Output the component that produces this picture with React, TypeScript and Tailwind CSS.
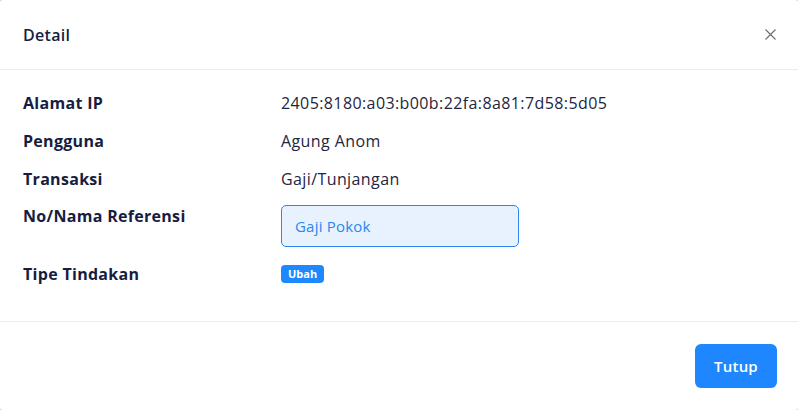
export default function App() {
  const rows = [
    { label: "Alamat IP", value: "2405:8180:a03:b00b:22fa:8a81:7d58:5d05" },
    { label: "Pengguna", value: "Agung Anom" },
    { label: "Transaksi", value: "Gaji/Tunjangan" },
  ];

  return (
    <div
      className="w-[798px] h-[410px] bg-gray-300"
      style={{ fontFamily: '"Open Sans", "Noto Sans", sans-serif' }}
    >
      <div className="w-full h-full bg-white rounded-[3px] flex flex-col">
        {/* header */}
        <div className="h-[70px] shrink-0 flex items-center justify-between pl-[23px] pr-[20px] border-b border-[#ececec]">
          <h2 className="text-[16px] font-semibold tracking-[0.3px] text-[#161d3f]">Detail</h2>
          <button className="w-4 h-4 flex items-center justify-center text-[#6b6b6b]">
            <svg width="11" height="11" viewBox="0 0 11 11" fill="none">
              <path d="M0.5 0.5L10.5 10.5M10.5 0.5L0.5 10.5" stroke="currentColor" strokeWidth="1.1" />
            </svg>
          </button>
        </div>

        {/* body */}
        <div className="flex-1 pl-[23px] pt-[22px] flex flex-col text-[16px]">
          {rows.map((r) => (
            <div key={r.label} className="flex h-[38px] items-start">
              <div className="w-[258px] font-bold tracking-[0.3px] text-[#161d3f] leading-[22px]">{r.label}</div>
              <div className="text-[#1e2540] tracking-[0.4px] leading-[22px]">{r.value}</div>
            </div>
          ))}
          <div className="flex items-start h-[58px] -mt-[1px]">
            <div className="w-[258px] font-bold tracking-[0.3px] text-[#161d3f] leading-[22px]">No/Nama Referensi</div>
            <div className="w-[238px] h-[42px] flex items-center px-[13px] rounded-[5px] border border-[#2a86f0] bg-[#e8f2fe] text-[15px] font-medium tracking-[0.2px] text-[#2a86f0]">
              Gaji Pokok
            </div>
          </div>
          <div className="flex items-center h-[22px]">
            <div className="w-[258px] font-bold tracking-[0.3px] text-[#161d3f] leading-[22px]">Tipe Tindakan</div>
            <span className="h-[18px] px-[7px] flex items-center rounded-[4px] bg-[#1e88ff] text-white text-[11px] font-bold">
              Ubah
            </span>
          </div>
        </div>

        {/* footer */}
        <div className="h-[89px] shrink-0 border-t border-[#ececec] flex items-center justify-end pr-[21px]">
          <button className="w-[82px] h-[44px] rounded-[6px] bg-[#1e87ff] text-white text-[15px] font-semibold tracking-[0.2px]">
            Tutup
          </button>
        </div>
      </div>
    </div>
  );
}
